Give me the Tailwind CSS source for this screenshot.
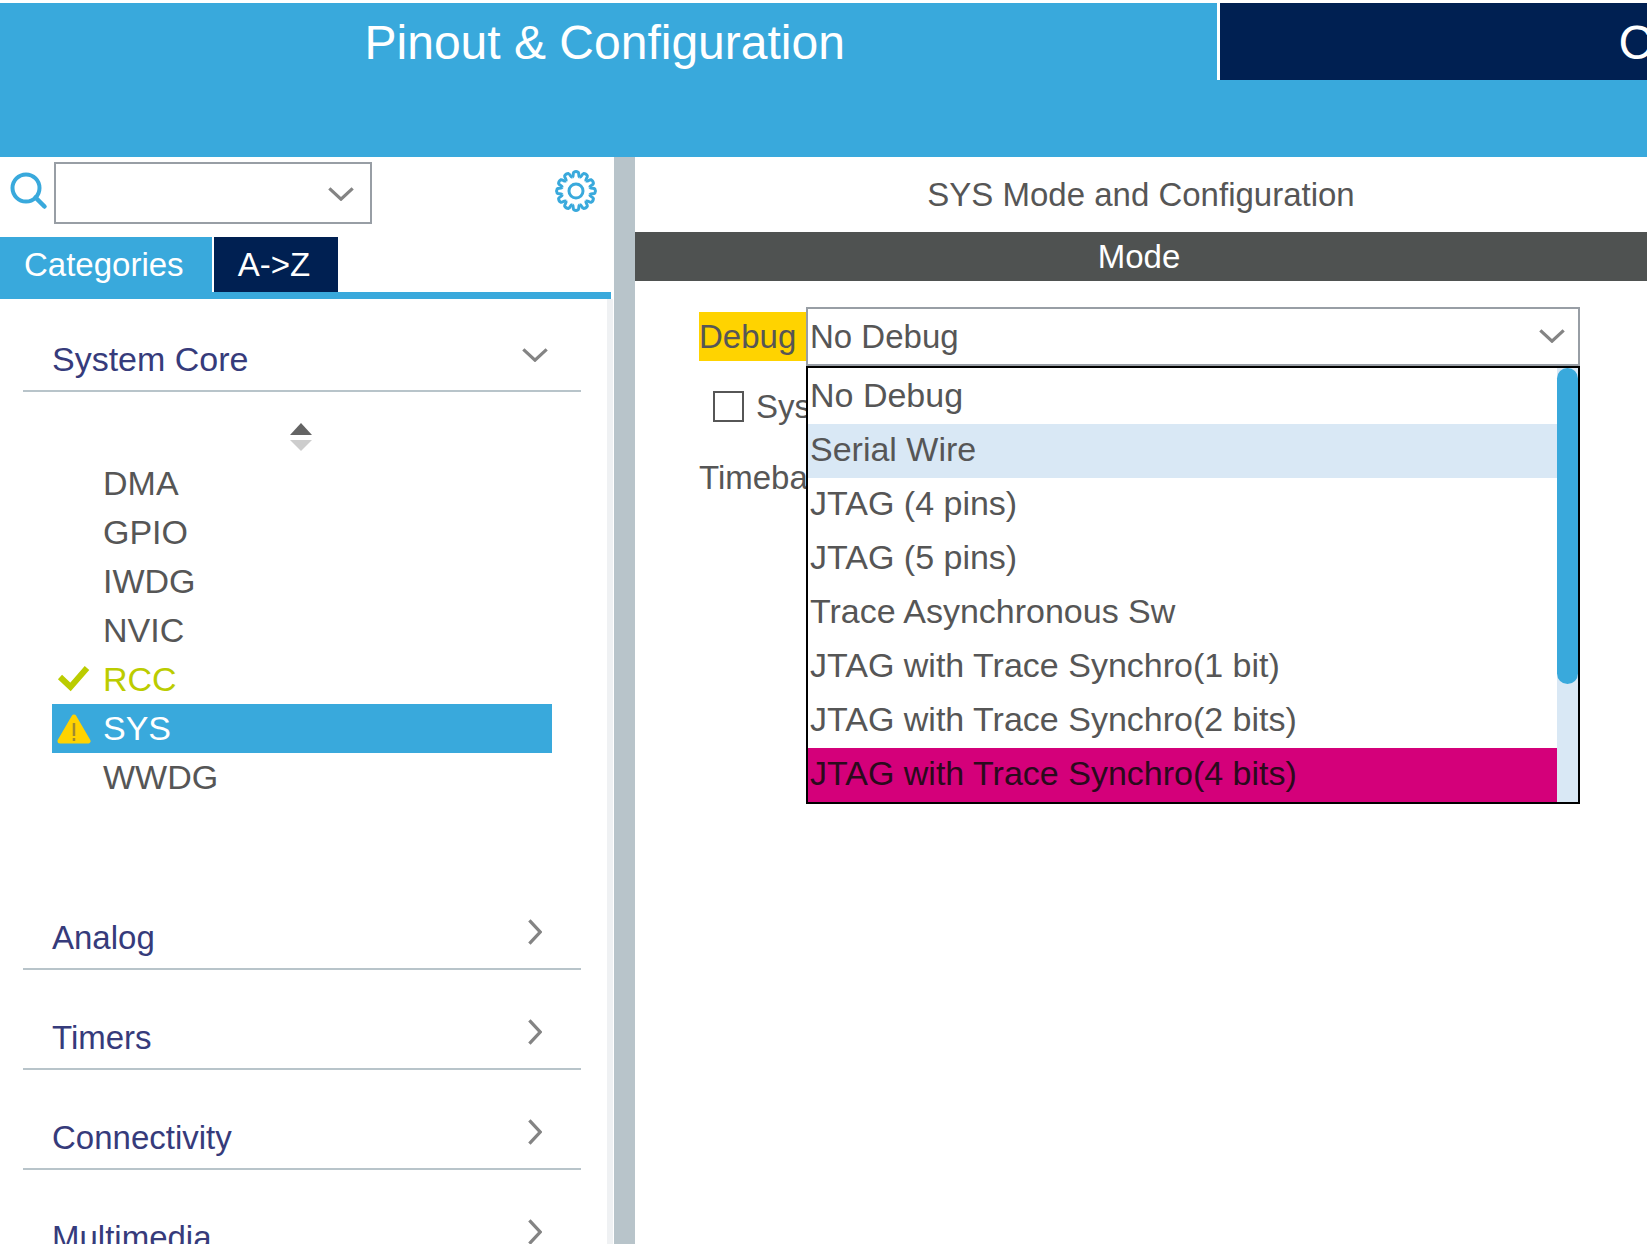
<!DOCTYPE html>
<html lang="en">
<head>
    <meta charset="UTF-8">
    <meta name="viewport" content="width=device-width, initial-scale=1.0">
    <title>Pinout &amp; Configuration</title>
    <script src="https://cdn.jsdelivr.net/npm/@tailwindcss/browser@4"></script>
</head>
<body class="h-screen overflow-hidden flex flex-col bg-white pt-[3px] font-['Liberation_Sans',Arial,sans-serif] text-[33px] leading-[49px] text-[#565656]">
    <!-- Main tabs -->
    <header class="shrink-0 bg-[#39a9dc] pb-[77px]">
        <nav class="flex h-[77px] text-[48px] text-white whitespace-nowrap">
            <button class="w-[74.1%] shrink-0 border-r-[3px] border-white pr-2 pt-[2px] text-center">Pinout &amp; Configuration</button>
            <button class="flex-1 min-w-0 overflow-hidden bg-[#002052] pl-[398px] pt-[2px] text-left">Clock Configuration</button>
        </nav>
    </header>

    <div class="flex flex-1 min-h-0">
        <!-- Sidebar -->
        <aside class="w-[614px] shrink-0 flex flex-col min-h-0">
            <div class="flex items-start h-[80px] pl-[10px] pr-4 pt-[5px]">
                <svg class="mt-[10px] w-[38px] h-[38px] shrink-0" viewBox="0 0 38 38" fill="none" stroke="#39a9dc" stroke-width="4">
                    <circle cx="16" cy="16" r="13.5"/>
                    <path d="M25.5 25.5L34.5 34.5" stroke-linecap="round" stroke-width="4.5"/>
                </svg>
                <div class="relative ml-[6px] w-[318px] h-[62px]">
                    <select aria-label="Search" class="appearance-none w-full h-full border-2 border-[#989ea5] bg-white pl-[2px]"><option></option></select>
                    <svg class="absolute right-[18px] top-[25px] w-[26px] h-[14px] pointer-events-none" viewBox="0 0 27 15" fill="none" stroke="#848484" stroke-width="3.5"><path d="M1 1.5L13.5 13L26 1.5"/></svg>
                </div>
                <button aria-label="Settings" class="ml-auto mt-[7px]">
                    <svg class="w-[44px] h-[44px]" viewBox="-22 -22 44 44" fill="none" stroke="#39a9dc" stroke-width="3">
                        <defs><path id="tooth" d="M-3.7 -13.8C-1.9 -14.8 -3.6 -17.3 -2.2 -18.8Q0 -20.1 2.2 -18.8C3.6 -17.3 1.9 -14.8 3.7 -13.8"/></defs>
                        <use href="#tooth"/><use href="#tooth" transform="rotate(30)"/><use href="#tooth" transform="rotate(60)"/>
                        <use href="#tooth" transform="rotate(90)"/><use href="#tooth" transform="rotate(120)"/><use href="#tooth" transform="rotate(150)"/>
                        <use href="#tooth" transform="rotate(180)"/><use href="#tooth" transform="rotate(210)"/><use href="#tooth" transform="rotate(240)"/>
                        <use href="#tooth" transform="rotate(270)"/><use href="#tooth" transform="rotate(300)"/><use href="#tooth" transform="rotate(330)"/>
                        <circle r="7"/>
                    </svg>
                </button>
            </div>

            <div class="flex shrink-0 h-[62px] gap-[2px] mr-[3px] border-b-[7px] border-[#39a9dc] text-white">
                <button class="w-[212px] bg-[#39a9dc] pl-6 text-left">Categories</button>
                <button class="w-[124px] bg-[#002052] pr-1">A-&gt;Z</button>
            </div>

            <div class="flex-1 min-h-0 overflow-hidden mr-[1px] border-r-[6px] border-[#eff1f3] pl-[23px] pr-[26px]">
                <button class="flex w-full h-[93px] items-end justify-between border-b-2 border-[#b8c4ca] pl-[29px] pr-[33px] pb-[6px] text-[34px] text-[#363b7b]">
                    System Core
                    <svg class="w-[26px] h-[14px] mb-[22px]" viewBox="0 0 27 15" fill="none" stroke="#848484" stroke-width="3.5"><path d="M1 1.5L13.5 13L26 1.5"/></svg>
                </button>
                <button aria-label="Sort" class="flex w-full h-[67px] pt-[31px] pr-[3px] justify-center">
                    <svg class="w-[22px] h-[28px]" viewBox="0 0 22 28"><path d="M0 12L11 0L22 12Z" fill="#646464"/><path d="M0 17L11 28L22 17Z" fill="#cdcdcd"/></svg>
                </button>
                <ul class="pl-[29px] pr-[29px] text-[34px]">
                    <li class="h-[49px] pl-[51px]">DMA</li>
                    <li class="h-[49px] pl-[51px]">GPIO</li>
                    <li class="h-[49px] pl-[51px]">IWDG</li>
                    <li class="h-[49px] pl-[51px]">NVIC</li>
                    <li class="h-[49px] flex items-center text-[#bbcc00]">
                        <svg class="w-[51px] h-[34px]" viewBox="0 0 51 34" fill="none" stroke="#bbcc00" stroke-width="6"><path d="M8 14L18.5 24L35 5"/></svg>RCC
                    </li>
                    <li class="h-[49px] flex items-center bg-[#39a9dc] text-white">
                        <svg class="w-[51px] h-[34px]" viewBox="0 0 51 34"><path d="M22 5L36 29H8Z" fill="#ffd300" stroke="#ffd300" stroke-width="5" stroke-linejoin="round"/><path d="M22 11V24M22 26V29" stroke="#a08a30" stroke-width="2.5"/></svg>SYS
                    </li>
                    <li class="h-[49px] pl-[51px]">WWDG</li>
                </ul>
                <div class="pt-[68px] text-[#363b7b]">
                    <button class="flex w-full h-[100px] items-end justify-between border-b-2 border-[#b8c4ca] pl-[29px] pr-[39px] pb-[6px]">
                        Analog
                        <svg class="w-[14px] h-[26px] mb-[17px]" viewBox="0 0 15 27" fill="none" stroke="#848484" stroke-width="3.5"><path d="M1.5 1L13 13.5L1.5 26"/></svg>
                    </button>
                    <button class="flex w-full h-[100px] items-end justify-between border-b-2 border-[#b8c4ca] pl-[29px] pr-[39px] pb-[6px]">
                        Timers
                        <svg class="w-[14px] h-[26px] mb-[17px]" viewBox="0 0 15 27" fill="none" stroke="#848484" stroke-width="3.5"><path d="M1.5 1L13 13.5L1.5 26"/></svg>
                    </button>
                    <button class="flex w-full h-[100px] items-end justify-between border-b-2 border-[#b8c4ca] pl-[29px] pr-[39px] pb-[6px]">
                        Connectivity
                        <svg class="w-[14px] h-[26px] mb-[17px]" viewBox="0 0 15 27" fill="none" stroke="#848484" stroke-width="3.5"><path d="M1.5 1L13 13.5L1.5 26"/></svg>
                    </button>
                    <button class="flex w-full h-[100px] items-end justify-between border-b-2 border-[#b8c4ca] pl-[29px] pr-[39px] pb-[6px]">
                        Multimedia
                        <svg class="w-[14px] h-[26px] mb-[17px]" viewBox="0 0 15 27" fill="none" stroke="#848484" stroke-width="3.5"><path d="M1.5 1L13 13.5L1.5 26"/></svg>
                    </button>
                </div>
            </div>
        </aside>

        <div class="w-[21px] shrink-0 bg-[#b8c4ca]"></div>

        <!-- Mode panel -->
        <main class="flex-1 min-w-0">
            <h1 class="h-[75px] pt-[13px] text-center">SYS Mode and Configuration</h1>
            <h2 class="h-[49px] bg-[#4f5251] pr-1 text-center text-white">Mode</h2>

            <div class="pl-16 pr-[67px] pt-[26px]">
                <div class="flex items-center">
                    <label for="debug" class="w-[107px] bg-[#ffd300]">Debug</label>
                    <div class="relative flex-1 h-[59px]">
                        <select id="debug" class="appearance-none w-full h-full border-2 border-[#989ea5] bg-white pl-[2px]">
                            <option>No Debug</option>
                            <option>Serial Wire</option>
                        </select>
                        <svg class="absolute right-[15px] top-[22px] w-[26px] h-[14px] pointer-events-none" viewBox="0 0 27 15" fill="none" stroke="#848484" stroke-width="3.5"><path d="M1 1.5L13.5 13L26 1.5"/></svg>
                        <!-- Open list -->
                        <div class="absolute left-0 right-0 top-full z-10 flex h-[438px] border-2 border-black bg-white">
                            <ul role="listbox" aria-label="Debug" class="flex-1 grid grid-rows-8 pt-[2px] text-[34px] leading-[51px] whitespace-nowrap">
                                <li role="option" class="pl-[2px]">No Debug</li>
                                <li role="option" class="pl-[2px] bg-[#d9e8f5]">Serial Wire</li>
                                <li role="option" class="pl-[2px]">JTAG (4 pins)</li>
                                <li role="option" class="pl-[2px]">JTAG (5 pins)</li>
                                <li role="option" class="pl-[2px]">Trace Asynchronous Sw</li>
                                <li role="option" class="pl-[2px]">JTAG with Trace Synchro(1 bit)</li>
                                <li role="option" class="pl-[2px]">JTAG with Trace Synchro(2 bits)</li>
                                <li role="option" class="pl-[2px] bg-[#d4007a] text-[#2a0a1c]">JTAG with Trace Synchro(4 bits)</li>
                            </ul>
                            <div class="w-[21px] bg-[#d9e8f5]">
                                <div class="h-[316px] rounded-full bg-[#39a9dc]"></div>
                            </div>
                        </div>
                    </div>
                </div>
                <label class="flex items-center mt-4 pl-[14px]">
                    <input type="checkbox" class="appearance-none mr-3 w-[31px] h-[31px] border-2 border-[#565656] bg-white">
                    System
                </label>
                <p class="mt-[22px]">Timebase</p>
            </div>
        </main>
    </div>
</body>
</html>
